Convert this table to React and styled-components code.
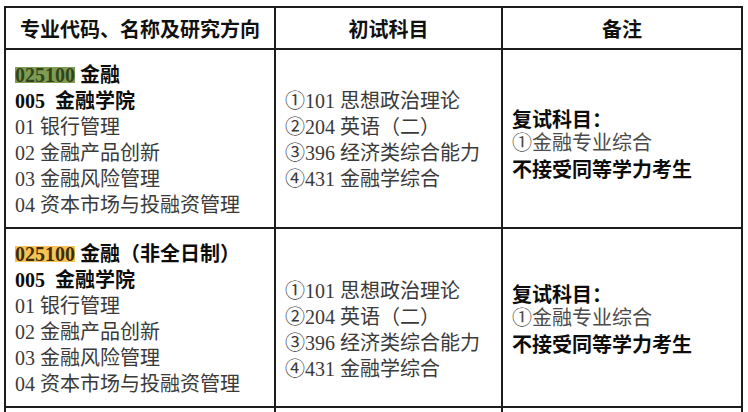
import React from 'react'
import styled, { createGlobalStyle } from 'styled-components';

const GlobalStyle = createGlobalStyle`
    html, body {
        margin: 0;
        padding: 0;
        background: #ffffff;
        overflow: hidden;
    }
`

const programs = [
    { code: '025100', name: '金融', tone: 'green', top: [12, 38, 56] },
    { code: '025100', name: '金融（非全日制）', tone: 'yellow', top: [12, 49, 52] },
];

const directions = ['01 银行管理', '02 金融产品创新', '03 金融风险管理', '04 资本市场与投融资管理'];
const subjects = ['①101 思想政治理论', '②204 英语（二）', '③396 经济类综合能力', '④431 金融学综合'];

const App = () => {
    return (
        <Page>
            <GlobalStyle />
            <Table>
                <colgroup>
                    <col style={{ width: 270 }} />
                    <col style={{ width: 227 }} />
                    <col style={{ width: 240 }} />
                </colgroup>
                <thead>
                    <tr>
                        <HeadCell>专业代码、名称及研究方向</HeadCell>
                        <HeadCell>初试科目</HeadCell>
                        <HeadCell>备注</HeadCell>
                    </tr>
                </thead>
                <tbody>
                    {programs.map((p, i) => (
                        <BodyRow key={i}>
                            <Cell $top={p.top[0]}>
                                <Line>
                                    <Code $tone={p.tone}>{p.code}</Code> <Strong>{p.name}</Strong>
                                </Line>
                                <Line><Strong>005  金融学院</Strong></Line>
                                {directions.map((d) => <Line key={d}>{d}</Line>)}
                            </Cell>
                            <Cell $top={p.top[1]}>
                                {subjects.map((s) => <Line key={s}>{s}</Line>)}
                            </Cell>
                            <Cell $top={p.top[2]}>
                                <Note $bold>复试科目：</Note>
                                <Note>①金融专业综合</Note>
                                <Note $bold>不接受同等学力考生</Note>
                            </Cell>
                        </BodyRow>
                    ))}
                    <tr>
                        <Cell $top={0} />
                        <Cell $top={0} />
                        <Cell $top={0} />
                    </tr>
                </tbody>
            </Table>
        </Page>
    )
}

export default App;

const Page = styled.div`
    padding: 6px 0 0 4px;
    height: 412px;
    box-sizing: border-box;
`

const Table = styled.table`
    border-collapse: collapse;
    table-layout: fixed;
    width: 739px;
`

const HeadCell = styled.th`
    height: 40px;
    padding: 0;
    border: 2px solid #1c1c1c;
    text-align: center;
    vertical-align: middle;
    font-family: "Noto Sans CJK SC", sans-serif;
    font-weight: 700;
    font-size: 20px;
    color: #111;
`

const BodyRow = styled.tr`
    height: 179px;
`

const Cell = styled.td`
    border: 2px solid #1c1c1c;
    vertical-align: top;
    padding: ${(p) => p.$top}px 0 0 9px;
    height: 40px;
`

const Line = styled.div`
    font-family: "Liberation Serif", "Noto Sans CJK SC", serif;
    font-size: 20px;
    line-height: 26px;
    color: #3a3a3a;
    white-space: pre;
`

const Strong = styled.span`
    font-weight: 700;
    color: #0d0d0d;
`

const Code = styled.span`
    display: inline-block;
    line-height: 16px;
    font-weight: 700;
    background: ${(p) => (p.$tone === 'green' ? '#7f9c55' : '#f5c455')};
    color: ${(p) => (p.$tone === 'green' ? '#33441a' : '#3f2c0c')};
`

const Note = styled.div`
    font-family: ${(p) => (p.$bold ? '"Noto Sans CJK SC", sans-serif' : '"Liberation Serif", "Noto Sans CJK SC", serif')};
    font-weight: ${(p) => (p.$bold ? 700 : 400)};
    font-size: 20px;
    line-height: 25px;
    color: ${(p) => (p.$bold ? '#0d0d0d' : '#4a4a4a')};
`
